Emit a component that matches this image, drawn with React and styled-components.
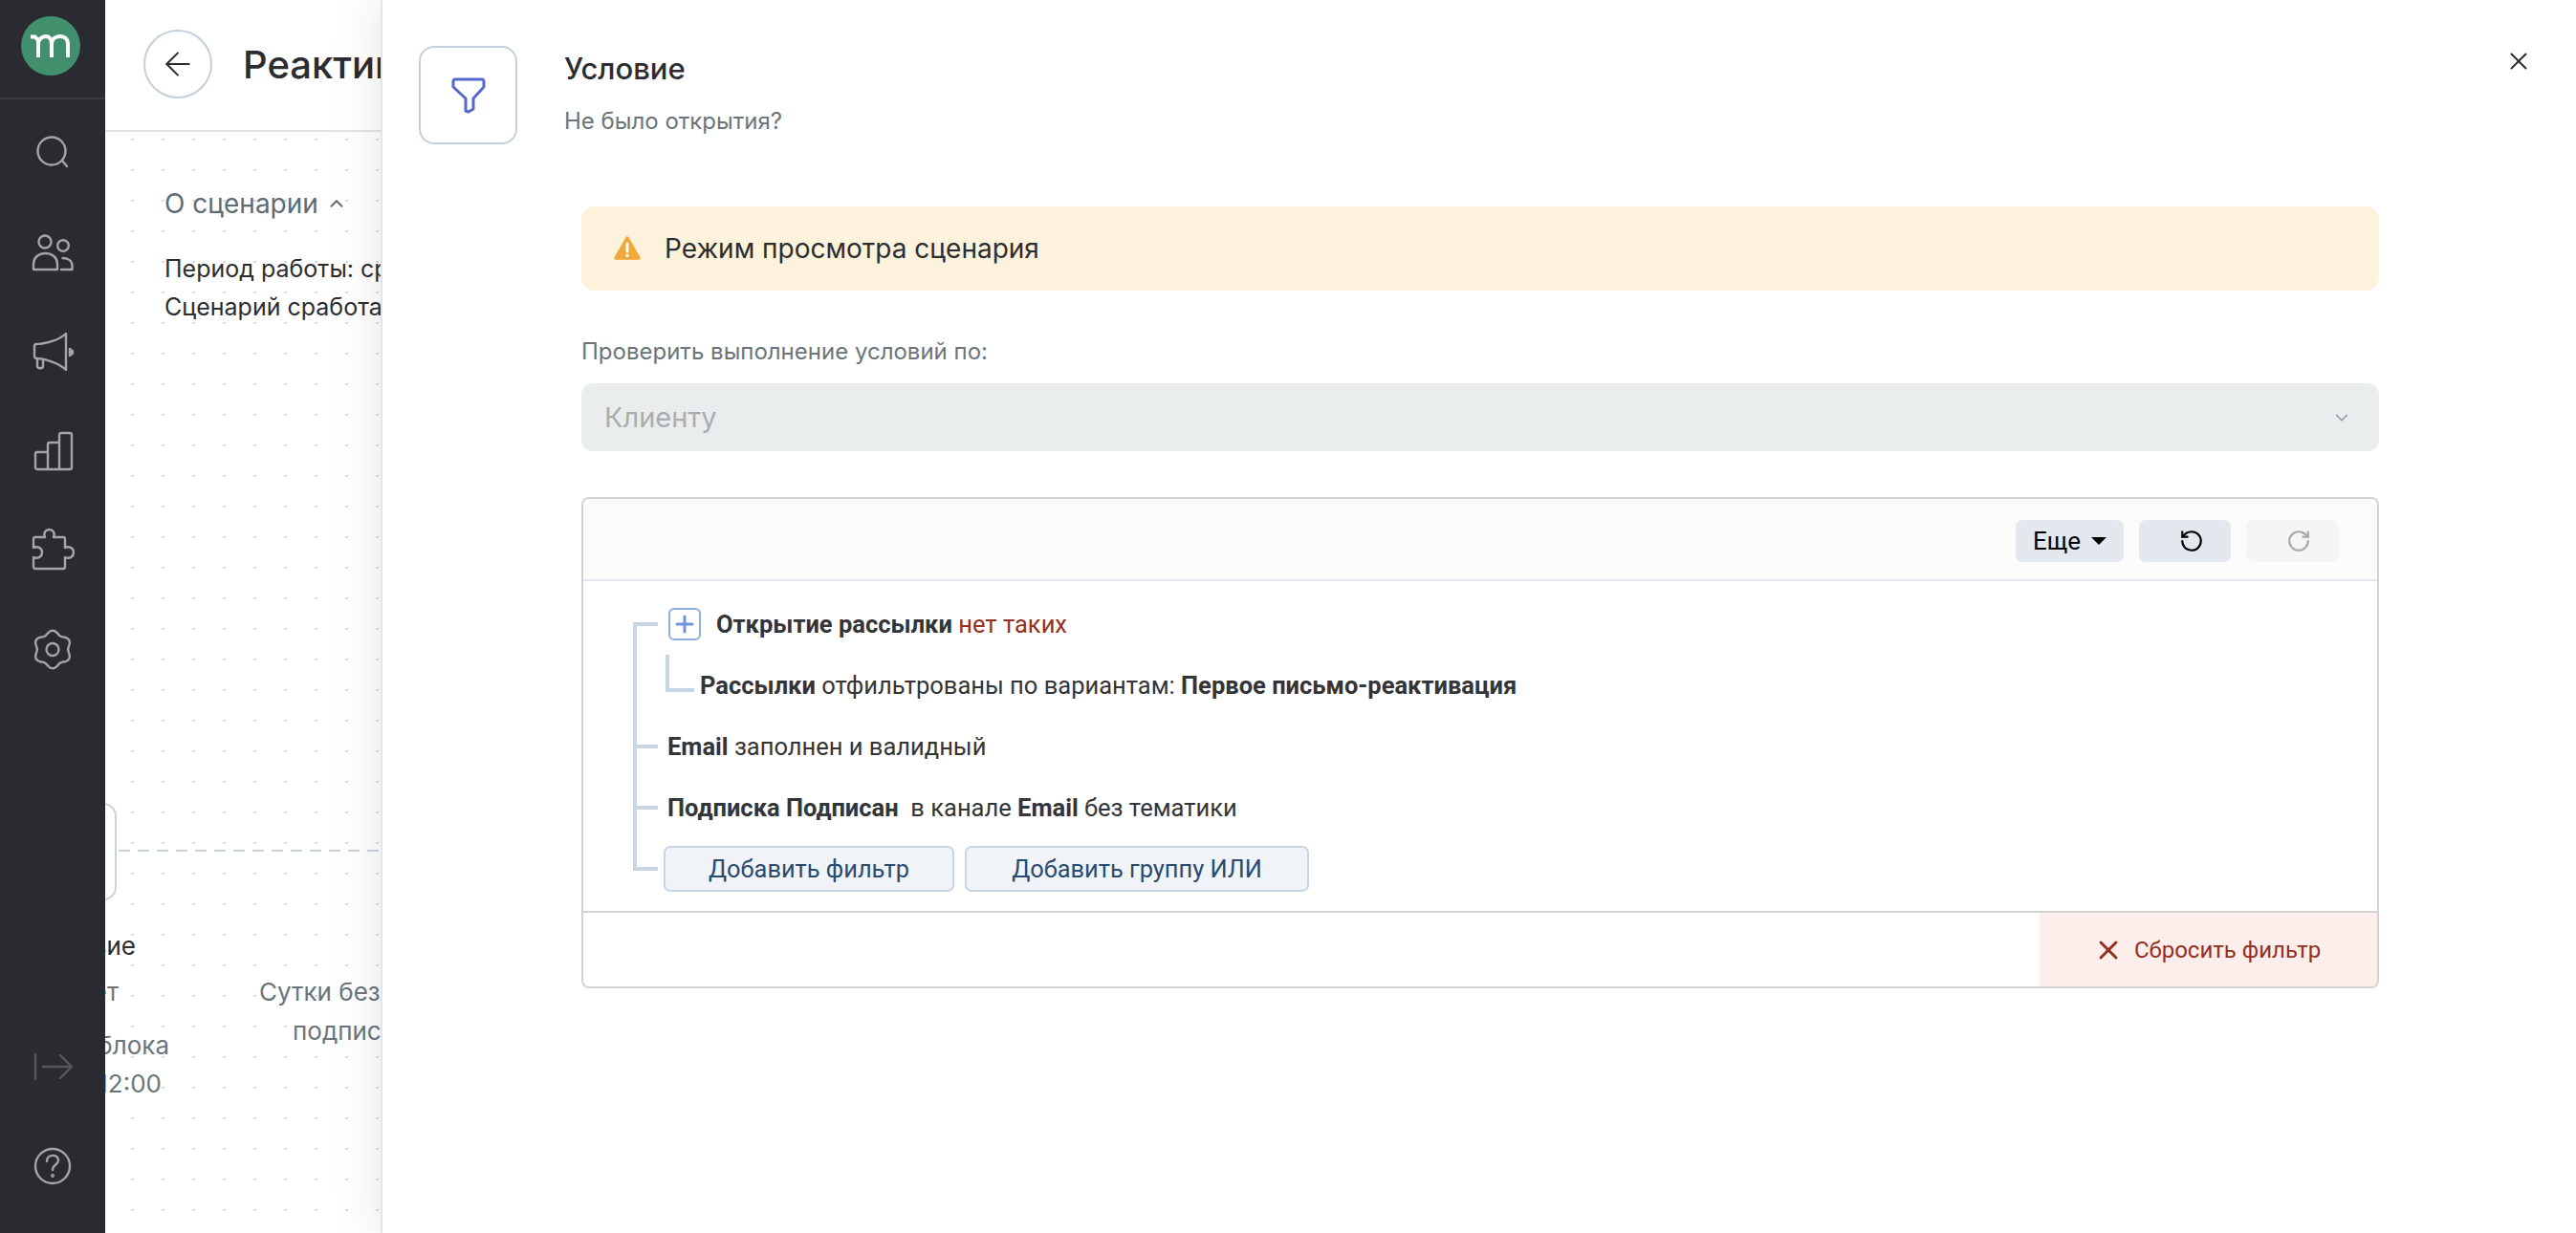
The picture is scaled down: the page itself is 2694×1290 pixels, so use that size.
import React from "react";
import styled, { createGlobalStyle } from "styled-components";
import { ArrowLeft, ChevronDown, ChevronUp, RotateCcw, RotateCw, X } from "lucide-react";

const GlobalStyle = createGlobalStyle`
  html, body {
    margin: 0;
    padding: 0;
    height: 100%;
    overflow: hidden;
    background: #fff;
    font-family: Inter, "Liberation Sans", sans-serif;
    color: #2b2d30;
  }
  * { box-sizing: border-box; }
`;

const Page = styled.div`
  position: relative;
  display: flex;
  width: 2694px;
  height: 1290px;
  overflow: hidden;
`;

/* left rail */
const Rail = styled.aside`
  position: relative;
  z-index: 2;
  flex: 0 0 110px;
  display: flex;
  flex-direction: column;
  padding-bottom: 18px;
  background: #292b31;
`;

const LogoBox = styled.div`
  height: 104px;
  margin-bottom: 2px;
  padding: 0 4px 6px 0;
  display: flex;
  align-items: center;
  justify-content: center;
  border-bottom: 2px solid #3a3c42;
`;

const RailItem = styled.div`
  height: 104px;
  display: flex;
  align-items: center;
  justify-content: center;
  color: ${(p) => (p.$dim ? "#55575c" : "#a3a5a8")};
  svg {
    overflow: visible;
    fill: none;
    stroke: currentColor;
    stroke-width: 2.4;
    stroke-linecap: round;
    stroke-linejoin: round;
  }
`;

const RailBottom = styled.div`
  margin-top: auto;
`;

const Logo = () => (
  <svg width="62" height="62" viewBox="0 0 62 62">
    <circle cx="31" cy="31" r="31" fill="#428f6e" />
    <path
      d="M10 21.5h4.5l3.5 3.5V43M18 29c0-5 4-8 8-8s6 4 6 8v14M32 29c0-5 4-8 9-8s8 3 8 8v14"
      fill="none"
      stroke="#fff"
      strokeWidth="4"
    />
  </svg>
);

const SearchIcon = () => (
  <svg width="42" height="42" viewBox="0 0 42 42">
    <circle cx="20" cy="21" r="14.5" />
    <path d="M31 31l5 6" />
  </svg>
);

const UsersIcon = () => (
  <svg width="44" height="42" viewBox="0 0 44 42">
    <circle cx="14" cy="12" r="6.5" />
    <circle cx="33" cy="16" r="5.8" />
    <path d="M2.5 41c-.3 0-.5-.2-.5-.5V35c0-6 5-11 12.5-11S27 29 27 35v6zM31 41h11.5v-4c0-5-4-8-10-8" />
  </svg>
);

const MegaphoneIcon = () => (
  <svg width="46" height="42" viewBox="0 0 46 42">
    <path d="M6 15c8 0 24-4 31-11v38c-7-7-23-12-31-12-1 0-2-1-2-2V17c0-1 1-2 2-2zM7 31v7c0 3 6 3 6 0v-6" />
    <path d="M41 20l3 2.5v2l-3 2.5z" fill="currentColor" />
  </svg>
);

const ChartIcon = () => (
  <svg width="42" height="42" viewBox="0 0 42 42">
    <path d="M5 42a2 2 0 0 1-2-2V26a2 2 0 0 1 2-2h11v-8a2 2 0 0 1 2-2h10V6a2 2 0 0 1 2-2h9a2 2 0 0 1 2 2v34a2 2 0 0 1-2 2zM16 24v18M28 14v28" />
  </svg>
);

const PuzzleIcon = () => (
  <svg width="50" height="42" viewBox="0 0 50 42">
    <path d="M7 9h10c-2-5 1-8 4.500-8S28 4 26 9h10c1 0 2 1 2 2v9c4-2 9 0 9 5s-5 7-9 5v10c0 1-1 2-2 2H7c-1 0-2-1-2-2V30c4 2 9 0 9-5s-5-7-9-5v-9c0-1 1-2 2-2z" />
  </svg>
);

// flower outline with six lobes, computed rather than typed point by point
const gearPath = () => {
  const points = [];
  for (let i = 0; i < 120; i++) {
    const a = (i / 120) * Math.PI * 2;
    const r = 18 + 1.8 * Math.cos(6 * a);
    points.push(`${(22 + r * Math.sin(a)).toFixed(2)} ${(22.5 - r * Math.cos(a)).toFixed(2)}`);
  }
  return `M${points.join("L")}z`;
};

const GearIcon = () => (
  <svg width="44" height="42" viewBox="0 0 44 42">
    <circle cx="22" cy="22.500" r="6.5" />
    <path d={gearPath()} />
  </svg>
);

const CollapseIcon = () => (
  <svg width="44" height="42" viewBox="0 0 44 42">
    <path d="M4 8v26M12 21h30M30 9l12 12-12 12" />
  </svg>
);

const HelpIcon = () => (
  <svg width="42" height="42" viewBox="0 0 42 42">
    <circle cx="21" cy="21" r="18" />
    <path d="M15 16c0-8 12-8 12-1 0 5-6 4-6 10" />
    <circle cx="21" cy="31" r=".8" />
  </svg>
);

/* page behind the drawer */
const Main = styled.main`
  flex: 1;
  display: flex;
  flex-direction: column;
  min-width: 0;
`;

const Header = styled.header`
  flex: 0 0 138px;
  display: flex;
  align-items: center;
  gap: 32px;
  padding: 0 0 2px 40px;
  border-bottom: 2px solid #dfe5e9;
`;

const BackButton = styled.div`
  width: 72px;
  height: 72px;
  display: flex;
  align-items: center;
  justify-content: center;
  border: 2px solid #c3d0db;
  border-radius: 50%;
  color: #2b2d30;
`;

const PageTitle = styled.h1`
  margin: 0;
  font-size: 40px;
  font-weight: 500;
  white-space: nowrap;
`;

const Canvas = styled.div`
  position: relative;
  flex: 1;
  padding: 53px 0 0 62px;
  background-image: radial-gradient(circle, #c6cdd2 1px, transparent 1.4px);
  background-size: 32px 32px;
  background-position: 12.6px -8px;
`;

const AboutToggle = styled.div`
  display: flex;
  align-items: center;
  gap: 8px;
  height: 44px;
  color: #5f6c73;
  font-size: 28px;
`;

const AboutLine = styled.div`
  margin-top: ${(p) => p.$top || 0}px;
  line-height: 40px;
  font-size: 25px;
  white-space: nowrap;
`;

const NodeBox = styled.div`
  position: absolute;
  left: -60px;
  top: 702px;
  width: 72px;
  height: 102px;
  border: 2px solid #c8d3dc;
  border-radius: 14px;
`;

const Edge = styled.div`
  position: absolute;
  left: 14px;
  top: 751px;
  width: 276px;
  height: 2px;
  background: repeating-linear-gradient(90deg, #c8d3dc 0 12px, transparent 12px 20px);
`;

const NodeText = styled.div`
  position: absolute;
  left: ${(p) => p.$x}px;
  top: ${(p) => p.$y}px;
  transform: translate(-${(p) => p.$shift ?? 100}%, -50%);
  font-size: 26px;
  line-height: 1.2;
  white-space: nowrap;
  color: ${(p) => (p.$dark ? "#2b2d30" : "#6a757b")};
`;

/* side drawer */
const Drawer = styled.section`
  position: absolute;
  z-index: 1;
  top: 0;
  right: 0;
  bottom: 0;
  left: 398px;
  padding: 48px 206px 0 38px;
  background: #fff;
  border-left: 2px solid #dfe5e9;
  box-shadow: 0 0 50px rgba(40, 45, 50, 0.12);
`;

const CloseButton = styled.div`
  position: absolute;
  top: 49px;
  right: 45px;
  color: #2b2d30;
  display: flex;
`;

const DrawerHead = styled.div`
  display: flex;
  gap: 50px;
`;

const IconBox = styled.div`
  flex: 0 0 103px;
  height: 103px;
  display: flex;
  align-items: center;
  justify-content: center;
  border: 2px solid #c3d0db;
  border-radius: 16px;
`;

const DrawerTitle = styled.div`
  padding-top: 6px;
  margin-left: -1px;
`;

const TitleText = styled.div`
  font-size: 31px;
  line-height: 36px;
  font-weight: 500;
`;

const SubText = styled.div`
  margin-top: 22px;
  font-size: 24px;
  line-height: 30px;
  color: #6a757b;
`;

const DrawerBody = styled.div`
  margin: 65px 0 0 170px;
`;

const Notice = styled.div`
  display: flex;
  align-items: center;
  gap: 24px;
  height: 88px;
  padding-left: 33px;
  background: #fdf3dc;
  border-radius: 14px;
  font-size: 28px;
`;

const FieldLabel = styled.div`
  margin-top: 48px;
  font-size: 24px;
  line-height: 32px;
  color: #6a757b;
`;

const SelectBox = styled.div`
  display: flex;
  align-items: center;
  justify-content: space-between;
  height: 71px;
  margin-top: 17px;
  padding: 0 28px 0 24px;
  background: #eaedee;
  border-radius: 12px;
  font-size: 29px;
  color: #a9adb0;
`;

const FilterCard = styled.div`
  display: flex;
  flex-direction: column;
  height: 514px;
  margin-top: 48px;
  border: 2px solid #d2d2d2;
  border-radius: 8px;
  overflow: hidden;
  color: #333538;
  font-family: Roboto, "Liberation Sans", sans-serif;
`;

const Toolbar = styled.div`
  flex: 0 0 86px;
  display: flex;
  align-items: center;
  justify-content: flex-end;
  gap: 16px;
  padding: 3px 41px 0 0;
  background: #fbfbfb;
  border-bottom: 2px solid #e2e8ed;
`;

const ToolButton = styled.div`
  display: flex;
  align-items: center;
  justify-content: center;
  gap: 11px;
  width: ${(p) => (p.$wide ? 113 : 96)}px;
  height: 44px;
  padding-left: ${(p) => (p.$wide ? 0 : 14)}px;
  border-radius: 7px;
  background: ${(p) => (p.$off ? "#f3f5f6" : "#e2e8ee")};
  color: ${(p) => (p.$off ? "#a8a8a8" : "#000")};
  font-size: 26px;
`;

const Caret = styled.span`
  width: 0;
  height: 0;
  border-left: 8px solid transparent;
  border-right: 8px solid transparent;
  border-top: 8px solid #000;
`;

const TreeArea = styled.div`
  flex: 1;
  padding: 13px 0 12px 88px;
`;

const Tree = styled.div`
  position: relative;
  &::before {
    content: "";
    position: absolute;
    left: -36px;
    top: 30px;
    bottom: 30px;
    width: 4px;
    background: #c8d6e4;
  }
`;

const TreeRow = styled.div`
  position: relative;
  display: flex;
  align-items: center;
  height: 64px;
  font-size: 25.5px;
  &::before {
    content: "";
    position: absolute;
    left: -36px;
    top: 30px;
    width: 26px;
    height: 4px;
    background: #c8d6e4;
  }
`;

const SubRow = styled.div`
  position: relative;
  display: flex;
  align-items: center;
  height: 64px;
  padding-left: 34px;
  font-size: 25.5px;
  &::before {
    content: "";
    position: absolute;
    left: -2px;
    top: 0;
    width: 26px;
    height: 35px;
    border-left: 4px solid #c8d6e4;
    border-bottom: 4px solid #c8d6e4;
  }
`;

const RowText = styled.span`
  white-space: pre;
`;

const PlusBox = styled.div`
  width: 34px;
  height: 34px;
  margin: 0 16px 0 1px;
  display: flex;
  align-items: center;
  justify-content: center;
  border: 2px solid #8fabe6;
  border-radius: 6px;
  svg {
    stroke: #6e94e0;
    stroke-width: 3;
    stroke-linecap: round;
  }
`;

const Strong = styled.b`
  font-weight: 700;
`;

const Danger = styled.span`
  color: #93301f;
`;

const AddButton = styled.div`
  display: flex;
  align-items: center;
  justify-content: center;
  width: ${(p) => p.$w}px;
  height: 48px;
  margin-right: 11px;
  background: #f0f4f8;
  border: 2px solid #c8d6e4;
  border-radius: 7px;
  color: #2b4a6f;
  font-size: 25.4px;
  &:first-of-type {
    margin-left: -4px;
  }
`;

const CardFooter = styled.div`
  flex: 1;
  display: flex;
  justify-content: flex-end;
  border-top: 2px solid #d2d2d2;
`;

const ResetButton = styled.div`
  width: 353px;
  display: flex;
  align-items: center;
  gap: 11px;
  padding-left: 56px;
  background: #fdeeeb;
  color: #93301f;
  font-size: 24px;
`;

export default function App() {
  return (
    <Page>
      <GlobalStyle />
      <Rail>
        <LogoBox>
          <Logo />
        </LogoBox>
        <RailItem><SearchIcon /></RailItem>
        <RailItem><UsersIcon /></RailItem>
        <RailItem><MegaphoneIcon /></RailItem>
        <RailItem><ChartIcon /></RailItem>
        <RailItem><PuzzleIcon /></RailItem>
        <RailItem><GearIcon /></RailItem>
        <RailBottom>
          <RailItem $dim><CollapseIcon /></RailItem>
          <RailItem><HelpIcon /></RailItem>
        </RailBottom>
      </Rail>

      <Main>
        <Header>
          <BackButton>
            <ArrowLeft size={40} strokeWidth={1.2} />
          </BackButton>
          <PageTitle>Реактивация</PageTitle>
        </Header>
        <Canvas>
          <AboutToggle>
            О сценарии <ChevronUp size={22} strokeWidth={2} />
          </AboutToggle>
          <AboutLine $top={26}>Период работы: среда</AboutLine>
          <AboutLine>Сценарий сработает</AboutLine>
          <NodeBox />
          <Edge />
          <NodeText $x={32} $y={852} $dark>Условие</NodeText>
          <NodeText $x={14} $y={900}>Ждет</NodeText>
          <NodeText $x={67} $y={956}>начала блока</NodeText>
          <NodeText $x={59} $y={996}>до 12:00</NodeText>
          <NodeText $x={161} $y={900} $shift={0}>Сутки без</NodeText>
          <NodeText $x={196} $y={941} $shift={0}>подписки</NodeText>
        </Canvas>
      </Main>

      <Drawer>
        <CloseButton>
          <X size={30} strokeWidth={1.6} />
        </CloseButton>
        <DrawerHead>
          <IconBox>
            <svg width="38" height="38" viewBox="0 0 38 38" fill="none">
              <path
                d="M3 4c0-1 1-2 2-2h28c1 0 2 1 2 2v6L24 22v11l-5 3-3-1V22L3 10z"
                stroke="#5569c9"
                strokeWidth="3"
                strokeLinejoin="round"
              />
            </svg>
          </IconBox>
          <DrawerTitle>
            <TitleText>Условие</TitleText>
            <SubText>Не было открытия?</SubText>
          </DrawerTitle>
        </DrawerHead>

        <DrawerBody>
          <Notice>
            <svg width="30" height="26" viewBox="0 0 30 26">
              <path
                d="M15 2L27 23H3z"
                fill="#f0a93a"
                stroke="#f0a93a"
                strokeWidth="3.5"
                strokeLinejoin="round"
              />
              <path d="M15 8v8" stroke="#fff" strokeWidth="3" strokeLinecap="round" />
              <circle cx="15" cy="20.5" r="1.7" fill="#fff" />
            </svg>
            Режим просмотра сценария
          </Notice>
          <FieldLabel>Проверить выполнение условий по:</FieldLabel>
          <SelectBox>
            Клиенту
            <ChevronDown size={22} strokeWidth={1.5} color="#8d9296" />
          </SelectBox>

          <FilterCard>
            <Toolbar>
              <ToolButton $wide>
                Еще <Caret />
              </ToolButton>
              <ToolButton>
                <RotateCcw size={26} strokeWidth={2} />
              </ToolButton>
              <ToolButton $off>
                <RotateCw size={26} strokeWidth={2} />
              </ToolButton>
            </Toolbar>
            <TreeArea>
              <Tree>
                <TreeRow>
                  <PlusBox>
                    <svg width="20" height="20" viewBox="0 0 20 20">
                      <path d="M10 2v16M2 10h16" />
                    </svg>
                  </PlusBox>
                  <RowText>
                    <Strong>Открытие рассылки </Strong>
                    <Danger>нет таких</Danger>
                  </RowText>
                </TreeRow>
                <SubRow>
                  <RowText>
                    <Strong>Рассылки</Strong> отфильтрованы по вариантам: <Strong>Первое письмо-реактивация</Strong>
                  </RowText>
                </SubRow>
                <TreeRow>
                  <RowText>
                    <Strong>Email</Strong> заполнен и валидный
                  </RowText>
                </TreeRow>
                <TreeRow>
                  <RowText>
                    <Strong>Подписка Подписан</Strong>{"  в канале "}<Strong>Email</Strong> без тематики
                  </RowText>
                </TreeRow>
                <TreeRow>
                  <AddButton $w={304}>Добавить фильтр</AddButton>
                  <AddButton $w={360}>Добавить группу ИЛИ</AddButton>
                </TreeRow>
              </Tree>
            </TreeArea>
            <CardFooter>
              <ResetButton>
                <X size={32} strokeWidth={2.2} />
                Сбросить фильтр
              </ResetButton>
            </CardFooter>
          </FilterCard>
        </DrawerBody>
      </Drawer>
    </Page>
  );
}
